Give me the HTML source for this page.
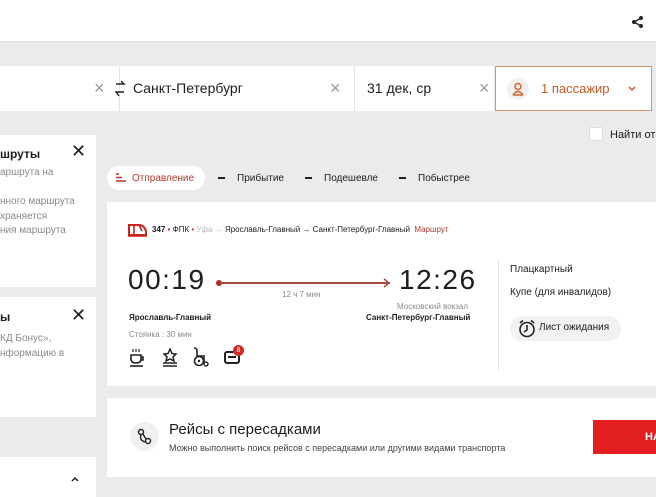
<!DOCTYPE html>
<html><head><meta charset="utf-8"><style>
*{box-sizing:border-box;margin:0;padding:0}
body{width:656px;height:493px;overflow:hidden;background:#ebebee;font-family:"Liberation Sans","DejaVu Sans",sans-serif;color:#1d1d1d;position:relative}
.a{position:absolute}
.w{background:#fff}
.g{color:#8a8a8a}
.d{display:inline-block;width:7px;height:2px;background:#222;vertical-align:middle;margin-right:12px}
</style></head><body>
<div class="a w" style="left:0;top:0;width:656px;height:42px;border-bottom:1px solid #e0e0e0"></div>
<svg class="a" style="left:631px;top:15px" width="13" height="14" viewBox="0 0 13 14"><circle cx="10" cy="3" r="2" fill="#222"/><circle cx="3" cy="7" r="2" fill="#222"/><circle cx="10" cy="11" r="2" fill="#222"/><path d="M10 3L3 7L10 11" stroke="#222" stroke-width="1.5" fill="none"/></svg>

<div class="a w" style="left:0;top:66px;width:494px;height:45px"></div>
<div class="a" style="left:119px;top:66px;width:1px;height:45px;background:#e3e3e3"></div>
<div class="a" style="left:354px;top:66px;width:1px;height:45px;background:#e3e3e3"></div>
<div class="a" style="left:94px;top:78px;font-size:18px;color:#999">×</div>
<svg class="a" style="left:114px;top:80px" width="12" height="17" viewBox="0 0 12 17"><path d="M2 4H10L7 1M10 12H2L5 16" stroke="#222" stroke-width="1.4" fill="none"/></svg>
<div class="a" style="left:133px;top:80px;font-size:14px">Санкт-Петербург</div>
<div class="a" style="left:330px;top:78px;font-size:18px;color:#999">×</div>
<div class="a" style="left:367px;top:80px;font-size:14px">31 дек, ср</div>
<div class="a" style="left:479px;top:78px;font-size:18px;color:#999">×</div>
<div class="a w" style="left:495px;top:66px;width:157px;height:45px;border:1px solid #d59668"></div>
<div class="a" style="left:507px;top:78px;width:22px;height:22px;border-radius:50%;background:#f0f0f0"></div>
<svg class="a" style="left:512px;top:82px" width="12" height="14" viewBox="0 0 12 14"><circle cx="6" cy="4.5" r="3" fill="none" stroke="#d0622a" stroke-width="1.5"/><path d="M1 13Q6 6 11 13M1 13H11" stroke="#d0622a" stroke-width="1.5" fill="none"/></svg>
<div class="a" style="left:541px;top:81px;font-size:13px;color:#c85a22">1 пассажир</div>
<svg class="a" style="left:628px;top:86px" width="8" height="6" viewBox="0 0 8 6"><path d="M1 1L4 4L7 1" stroke="#c85a22" stroke-width="1.5" fill="none"/></svg>

<div class="a w" style="left:589px;top:127px;width:14px;height:14px;border:1px solid #ddd;border-radius:2px"></div>
<div class="a" style="left:610px;top:129px;font-size:11px">Найти от</div>

<div class="a w" style="left:0;top:135px;width:96px;height:152px"></div>
<div class="a" style="left:0;top:147px;font-size:12px;font-weight:bold">шруты</div>
<div class="a" style="left:71px;top:141px;font-size:18px">✕</div>
<div class="a g" style="left:0;top:166px;font-size:10px;line-height:14.5px">аршрута на<br><br>нного маршрута<br>храняется<br>ния маршрута</div>

<div class="a w" style="left:0;top:297px;width:96px;height:120px"></div>
<div class="a" style="left:0;top:310px;font-size:12px;font-weight:bold">ы</div>
<div class="a" style="left:71px;top:305px;font-size:18px">✕</div>
<div class="a g" style="left:0;top:331px;font-size:10px;line-height:15px">КД Бонус»,<br>нформацию в</div>
<div class="a w" style="left:0;top:457px;width:96px;height:40px"></div>
<svg class="a" style="left:71px;top:476px" width="8" height="6" viewBox="0 0 8 6"><path d="M1 5L4 2L7 5" stroke="#222" stroke-width="1.5" fill="none"/></svg>

<div class="a w" style="left:107px;top:166px;width:98px;height:24px;border-radius:12px"></div>
<svg class="a" style="left:116px;top:173px" width="10" height="9" viewBox="0 0 10 9"><path d="M0 1H3M0 4.5H6M0 8H10" stroke="#b83a2c" stroke-width="1.5"/></svg>
<div class="a" style="left:132px;top:173px;font-size:10px;color:#b83a2c">Отправление</div>
<div class="a" style="left:218px;top:173px;font-size:10px"><span class="d"></span>Прибытие</div>
<div class="a" style="left:305px;top:173px;font-size:10px"><span class="d"></span>Подешевле</div>
<div class="a" style="left:399px;top:173px;font-size:10px"><span class="d"></span>Побыстрее</div>

<div class="a w" style="left:107px;top:202px;width:549px;height:184px"></div>
<svg class="a" style="left:128px;top:223px" width="19" height="14" viewBox="0 0 19 14"><path d="M1 12V2H11Q16 2 18 8V12Z" fill="none" stroke="#c8231c" stroke-width="2"/><path d="M6 2V12M11 2L14 8M0 13H19" stroke="#c8231c" stroke-width="1.6"/></svg>
<div class="a" style="left:152px;top:225px;font-size:8px"><b>347</b> <span style="color:#c8231c">•</span> ФПК <span style="color:#c8231c">•</span> <span style="color:#bbb">Уфа →</span> Ярославль-Главный → Санкт-Петербург-Главный &nbsp;<span style="color:#b43a2e">Маршрут</span></div>
<div class="a" style="left:128px;top:264px;font-size:28px;letter-spacing:1.5px">00:19</div>
<div class="a" style="left:216px;top:280px;width:6px;height:6px;border-radius:50%;background:#b52a22"></div>
<div class="a" style="left:220px;top:282px;width:170px;height:2px;background:#a84a44"></div>
<svg class="a" style="left:383px;top:278px" width="8" height="10" viewBox="0 0 8 10"><path d="M1 1L6 5L1 9" stroke="#a84a44" stroke-width="1.5" fill="none"/></svg>
<div class="a g" style="left:282px;top:290px;font-size:8px">12 ч 7 мин</div>
<div class="a" style="left:399px;top:264px;font-size:28px;letter-spacing:1.5px">12:26</div>
<div class="a g" style="left:397px;top:302px;font-size:8px">Московский вокзал</div>
<div class="a" style="left:129px;top:313px;font-size:8px;font-weight:bold">Ярославль-Главный</div>
<div class="a" style="left:366px;top:313px;font-size:8px;font-weight:bold">Санкт-Петербург-Главный</div>
<div class="a g" style="left:129px;top:330px;font-size:8px">Стоянка : 30 мин</div>
<svg class="a" style="left:129px;top:348px" width="16" height="20" viewBox="0 0 16 20"><path d="M4 1V4M7 1V4M10 1V4" stroke="#222" stroke-width="1.2"/><path d="M2 7H12V11Q12 15 7 15Q2 15 2 11Z M12 9H14V12H12" fill="none" stroke="#222" stroke-width="1.6"/><path d="M1 18H14" stroke="#222" stroke-width="1.6"/></svg>
<svg class="a" style="left:162px;top:348px" width="16" height="20" viewBox="0 0 16 20"><path d="M8 1L10 5.5L14 6L11 9L12 13L8 11L4 13L5 9L2 6L6 5.5Z" fill="none" stroke="#222" stroke-width="1.5"/><path d="M1 15H15M1 18H15" stroke="#222" stroke-width="1.5"/></svg>
<svg class="a" style="left:192px;top:347px" width="18" height="21" viewBox="0 0 18 21"><path d="M2 1Q5 1 5 4V9H12V15" fill="none" stroke="#222" stroke-width="1.6"/><circle cx="7" cy="14" r="4.5" fill="none" stroke="#222" stroke-width="1.6"/><circle cx="7" cy="14" r="1.2" fill="#222"/><circle cx="14" cy="17" r="2" fill="none" stroke="#222" stroke-width="1.4"/></svg>
<div class="a" style="left:224px;top:351px;width:16px;height:13px;border:2px solid #222;border-radius:3px"></div>
<div class="a" style="left:228px;top:356px;width:8px;height:2px;background:#222"></div>
<div class="a" style="left:233px;top:345px;width:11px;height:11px;border-radius:50%;background:#d32a25;color:#fff;font-size:7px;text-align:center;line-height:11px">8</div>
<div class="a" style="left:498px;top:260px;width:1px;height:110px;background:#e3e3e3"></div>
<div class="a" style="left:510px;top:264px;font-size:10px">Плацкартный</div>
<div class="a" style="left:510px;top:287px;font-size:10px">Купе (для инвалидов)</div>
<div class="a" style="left:510px;top:316px;width:111px;height:25px;border-radius:12px;background:#f2f2f3"></div>
<svg class="a" style="left:518px;top:319px" width="18" height="19" viewBox="0 0 18 19"><circle cx="9" cy="10.5" r="7" fill="none" stroke="#222" stroke-width="1.6"/><path d="M9 6V11L6 13M2 4L5 1.5M16 4L13 1.5" stroke="#222" stroke-width="1.6" fill="none"/></svg>
<div class="a" style="left:539px;top:322px;font-size:10px">Лист ожидания</div>

<div class="a w" style="left:107px;top:398px;width:549px;height:79px"></div>
<div class="a" style="left:130px;top:422px;width:29px;height:29px;border-radius:50%;background:#f0f0f1"></div>
<svg class="a" style="left:137px;top:428px" width="15" height="17" viewBox="0 0 15 17"><circle cx="4" cy="4" r="2.5" fill="none" stroke="#222" stroke-width="1.4"/><circle cx="11" cy="13" r="2.5" fill="none" stroke="#222" stroke-width="1.4"/><path d="M6 6L9 11M4 7Q2 12 8 14" stroke="#222" stroke-width="1.4" fill="none"/></svg>
<div class="a" style="left:169px;top:421px;font-size:15px">Рейсы с пересадками</div>
<div class="a" style="left:169px;top:443px;font-size:9px;color:#444">Можно выполнить поиск рейсов с пересадками или другими видами транспорта</div>
<div class="a" style="left:593px;top:420px;width:63px;height:34px;background:#e31e1e;color:#fff;font-size:11px;font-weight:bold;padding:11px 0 0 52px">НА</div>
</body></html>
